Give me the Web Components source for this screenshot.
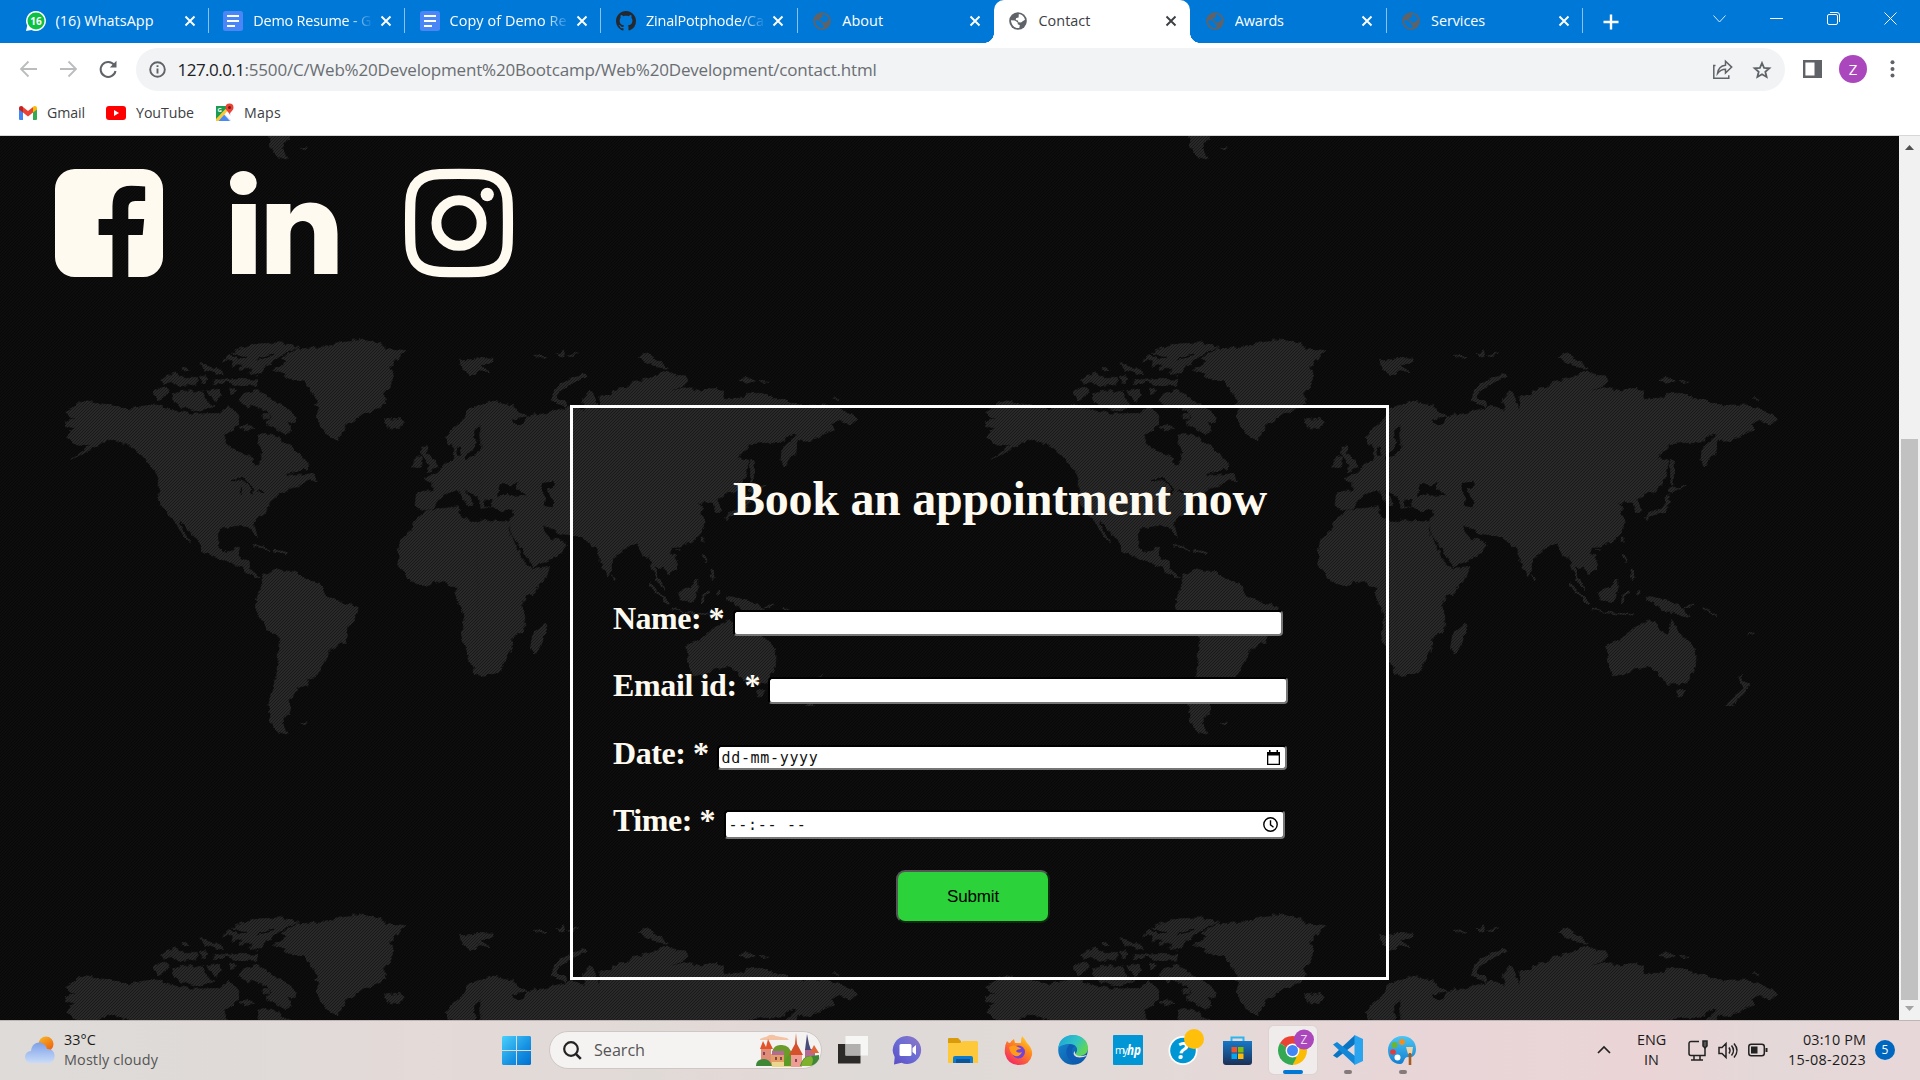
<!DOCTYPE html>
<html lang="en">
<head>
<meta charset="utf-8">
<title>Contact</title>
<style>
html,body{margin:0;height:100%;overflow:hidden;background:#fff;font-family:"Open Sans","Noto Sans",sans-serif}
</style>
</head>
<body>
<desktop-screen></desktop-screen>
<script>
function define(name, css, html){
  const t=document.createElement('template');
  t.innerHTML='<style>:host{display:block;box-sizing:border-box}*{box-sizing:border-box}svg{display:block;flex:none;overflow:visible}'+css+'</style>'+html;
  customElements.define(name,class extends HTMLElement{
    constructor(){super();this.attachShadow({mode:'open'}).append(t.content.cloneNode(true));}
  });
}
/* Text run that is tracked to an exact width given in its "w" attribute */
const runs=[];
customElements.define('fit-text',class extends HTMLElement{
  constructor(){super();this.attachShadow({mode:'open'}).innerHTML='<style>:host{display:inline-block;white-space:pre;flex:none}</style><slot></slot>';}
  connectedCallback(){runs.push(this);}
  fit(){
    const w=+this.getAttribute('w');if(!w)return;
    const n=this.textContent.length,now=this.getBoundingClientRect().width;
    this.style.letterSpacing=((w-now)/n).toFixed(3)+'px';
  }
});

const globe='<svg width="18" height="18" viewBox="0 0 18 18"><circle cx="9" cy="9" r="8.8" fill="#5f6368"/><path fill="var(--gap,#0078d7)" d="M9.800 1.900c3 .3 5.600 2.600 6.200 5.800l-2.300 1.500-1.700 1.200-2.700-.2-.3-1.800-2.300-.3.5-2 2.400-.5zM1.900 8.300l3.900.1 2.700 1.900.3 2 2 1-.5 2.700c-4 .7-7.800-2-8.400-7.700z"/></svg>';
const docs='<svg width="20" height="20" viewBox="0 0 20 20"><rect width="20" height="20" rx="2.500" fill="#4a86f5"/><path stroke="#fff" stroke-width="2.200" d="M4 5h12M4 10h12M4 15h8"/></svg>';
const cat='<svg width="20" height="20" viewBox="0 0 16 16"><path fill="#24292f" d="M8 0C3.580 0 0 3.580 0 8c0 3.540 2.290 6.530 5.470 7.590.4.070.55-.17.55-.38 0-.19-.01-.82-.01-1.490-2.010.37-2.530-.49-2.690-.94-.09-.23-.48-.94-.82-1.130-.28-.15-.68-.52-.01-.53.63-.01 1.080.58 1.230.82.72 1.210 1.870.87 2.330.66.070-.52.28-.87.51-1.070-1.780-.2-3.640-.89-3.640-3.950 0-.87.31-1.590.82-2.150-.08-.2-.36-1.020.08-2.120 0 0 .67-.21 2.200.82.64-.18 1.320-.27 2-.27s1.360.09 2 .27c1.530-1.040 2.200-.82 2.200-.82.44 1.100.16 1.920.08 2.120.51.56.82 1.270.82 2.150 0 3.070-1.870 3.750-3.650 3.950.29.25.54.73.54 1.480 0 1.070-.01 1.930-.01 2.200 0 .21.15.46.55.38A8.010 8.010 0 0 0 16 8c0-4.420-3.580-8-8-8z"/></svg>';
const wa='<svg width="20" height="20" viewBox="0 0 20 20"><path fill="#fff" d="M10 0a10 10 0 1 1-4.600 18.900L0 20l1.200-5.200A10 10 0 0 1 10 0z"/><circle cx="10" cy="10" r="8.500" fill="#0dc143"/><text x="10" y="13.800" font-size="10" font-weight="700" text-anchor="middle" fill="#fff" font-family="Open Sans">16</text></svg>';

define('browser-tab',`
:host{width:196.300px;height:43px;flex:none;display:flex;align-items:center;padding:0 0 2px 14.500px;color:#fff;font-size:14.400px;position:relative}
:host([first]){padding-left:13px}
:host([active]){background:#fff;color:#3c4043;border-radius:10px 10px 0 0;--gap:#fff;margin:0}
:host([active])::before,:host([active])::after{content:"";position:absolute;bottom:0;width:10px;height:10px;background:radial-gradient(circle at 0 0,#0078d7 9.600px,#fff 10px)}
:host([active])::before{left:-10px}:host([active])::after{right:-10px;background:radial-gradient(circle at 100% 0,#0078d7 9.600px,#fff 10px)}
.i{width:20px;display:flex;justify-content:center;margin-right:10px}
.l{width:120px;overflow:hidden;white-space:nowrap;line-height:20px}
:host([fade]) .l{-webkit-mask:linear-gradient(90deg,#000 94px,transparent 120px);mask:linear-gradient(90deg,#000 94px,transparent 120px)}
.x{margin-left:7.500px}
:host([first]) .x{margin-left:9px}
.s{width:1px;height:25px;background:#8cc0ee;margin-left:auto;display:none}
:host([sep]) .s{display:block}
`,`<div class="i"><slot name="icon"></slot></div><div class="l"><slot></slot></div><svg class="x" width="10" height="10" viewBox="0 0 10 10"><path d="M.5.5l9 9M9.500.5l-9 9" stroke="currentColor" stroke-width="1.900"/></svg><div class="s"></div>`);

define('tab-strip',`
:host{height:43px;background:#0078d7;display:flex;padding-left:12.500px;align-items:center;color:#fff}
.plus{margin-left:20px}.win{margin:0 23px 6px auto;display:flex;gap:44px;align-items:center}
`,`
<browser-tab first sep><span slot="icon">${wa}</span><fit-text w="98">(16) WhatsApp</fit-text></browser-tab>
<browser-tab sep fade><span slot="icon">${docs}</span><fit-text w="118">Demo Resume - G</fit-text></browser-tab>
<browser-tab sep fade><span slot="icon">${docs}</span><fit-text w="117">Copy of Demo Re</fit-text></browser-tab>
<browser-tab sep fade><span slot="icon">${cat}</span><fit-text w="118">ZinalPotphode/Ca</fit-text></browser-tab>
<browser-tab><span slot="icon">${globe}</span><fit-text w="41">About</fit-text></browser-tab>
<browser-tab active><span slot="icon">${globe}</span><fit-text w="52">Contact</fit-text></browser-tab>
<browser-tab sep><span slot="icon">${globe}</span><fit-text w="49">Awards</fit-text></browser-tab>
<browser-tab sep><span slot="icon">${globe}</span><fit-text w="54">Services</fit-text></browser-tab>
<svg class="plus" width="16" height="16"><path d="M8 .5v15M.5 8h15" stroke="#fff" stroke-width="2.400"/></svg>
<div class="win">
<svg width="13" height="8"><path d="M.5.5l6 6.500 6-6.500" fill="none" stroke="#d6e9f9"/></svg>
<svg width="13" height="2"><path d="M0 .5h13" stroke="#fff"/></svg>
<svg width="13" height="13" fill="none" stroke="#fff"><rect x=".5" y="2.500" width="10" height="10" rx="1.500"/><path d="M3 .5h7a2.500 2.500 0 0 1 2.500 2.500v7"/></svg>
<svg width="13" height="13"><path d="M.5.5l12 12M12.500.5l-12 12" stroke="#fff"/></svg>
</div>`);

define('tool-bar',`
:host{height:48px;display:flex;align-items:center;padding:5px 25px 0 18.500px;background:#fff}
.nav{display:flex;gap:21px;width:117px;margin-top:-1px}
.url{flex:1;height:43px;border-radius:22px;background:#f1f3f4;display:flex;align-items:center;padding:0 14px 0 13px;font-size:17px;color:#6a6e73}
.url b{font-weight:400;color:#202124}
.t{margin-left:12px;line-height:22px;display:flex}
.r{margin-left:auto;display:flex;gap:20px;align-items:center}
.end{display:flex;align-items:center;margin:-1px 0 0 18px}
.av{width:28px;height:28px;border-radius:50%;background:#ab47bc;color:#fff;font-size:15px;line-height:28px;text-align:center;margin:0 23px 0 17px}
`,`
<div class="nav">
<svg width="19" height="18" fill="none" stroke="#babcbe" stroke-width="1.800"><path d="M18 9H2M9.500 1.500L2 9l7.500 7.500"/></svg>
<svg width="19" height="18" fill="none" stroke="#babcbe" stroke-width="1.800"><path d="M1 9h16M9.500 1.500L17 9l-7.500 7.500"/></svg>
<svg width="18" height="18" fill="none" stroke="#5f6368" stroke-width="2"><path d="M15.200 5A7.500 7.500 0 1 0 16.500 11"/><path d="M17.500.8v6.700h-6.700z" fill="#5f6368" stroke="none"/></svg>
</div>
<div class="url"><svg width="17" height="17" fill="none" stroke="#5f6368"><circle cx="8.500" cy="8.500" r="7.300" stroke-width="1.900"/><path stroke-width="1.900" d="M8.500 7.500v5M8.500 4.200v1.900"/></svg>
<div class="t"><b><fit-text w="67">127.0.0.1</fit-text></b><fit-text w="632">:5500/C/Web%20Development%20Bootcamp/Web%20Development/contact.html</fit-text></div>
<div class="r"><svg width="20" height="19" fill="none" stroke="#5f6368" stroke-width="1.500"><path d="M2.500 5.500H.8v12.700h15v-3"/><path d="M4.500 13.500c.6-5 3.400-7.800 8-8.300V1.300l6.200 5.800-6.200 6V9.300c-3.500 0-6 1.500-8 4.200z"/></svg>
<svg width="18" height="18" viewBox="0 0 20 20"><path fill="none" stroke="#5f6368" stroke-width="2" d="M10 2.200l2.300 5.400 5.900.5-4.500 3.900 1.400 5.700L10 14.700l-5.100 3 1.400-5.700-4.500-3.900 5.900-.5z"/></svg></div></div>
<div class="end"><svg width="19" height="18"><path d="M1.200 1.200h16.600v15.600H1.200z" fill="#fff" stroke="#5f6368" stroke-width="2.400"/><path d="M11.500 0H19v18h-7.500z" fill="#5f6368"/></svg>
<div class="av">Z</div>
<svg width="5" height="18" fill="#5f6368"><circle cx="2.500" cy="2.200" r="2"/><circle cx="2.500" cy="9" r="2"/><circle cx="2.500" cy="15.500" r="2"/></svg></div>`);

define('bookmark-bar',`
:host{height:45px;border-bottom:1px solid #d5d8da;background:#fff;display:flex;align-items:center;padding:0 0 1px 19px;font-size:14.200px;color:#3c4043}
span{display:flex;align-items:center;margin-right:21px}svg{margin-right:10px}
`,`
<span><svg width="18" height="14" viewBox="0 0 18 14"><path fill="#4285f4" d="M0 2v11a1 1 0 0 0 1 1h3V5z"/><path fill="#34a853" d="M18 2v11a1 1 0 0 1-1 1h-3V5z"/><path fill="#ea4335" d="M4 1l5 4 5-4v5.500L9 10.500 4 6.500z"/><path fill="#c5221f" d="M0 2.200C0 0 2.500-.5 4 .8v5.700L0 3.600z"/><path fill="#fbbc04" d="M18 2.200C18 0 15.500-.5 14 .8v5.700l4-2.900z"/></svg><fit-text w="38">Gmail</fit-text></span>
<span><svg width="20" height="14" viewBox="0 0 20 14"><rect width="20" height="14" rx="3" fill="#f00"/><path d="M8 4l5 3-5 3z" fill="#fff"/></svg><fit-text w="58">YouTube</fit-text></span>
<span><svg width="19" height="19" viewBox="0 0 19 19"><path d="M1 3h15v15H1z" fill="#e8eaed"/><path d="M1 3h13l-7 7.500L1 17z" fill="#1e9b52"/><path d="M3 18l6-6.500 6 6.500z" fill="#4a89f3"/><path d="M9 10l3-3 5 8-1 2z" fill="#fff"/><path d="M1 16L10.500 6l2 2L3.500 18H1z" fill="#fbc934"/><path d="M14.500 12c0-3-4-4-4-7.500a4 4 0 0 1 8 0c0 3.500-4 4.500-4 7.500z" fill="#e94335"/><circle cx="14.500" cy="4.500" r="1.500" fill="#811411"/><text x="2.500" y="9" font-size="6" fill="#fff" font-weight="700" font-family="Open Sans">G</text></svg><fit-text w="37">Maps</fit-text></span>`);

/* Repeating 920x575 world map under a fine diagonal weave */
define('world-backdrop',`:host{overflow:hidden}svg{width:100%;height:100%}`,`
<svg xmlns="http://www.w3.org/2000/svg"><defs>
<filter id="rough" x="0" y="0" width="920" height="575" filterUnits="userSpaceOnUse" color-interpolation-filters="sRGB"><feTurbulence type="fractalNoise" baseFrequency=".16" numOctaves="2" seed="4"/><feDisplacementMap in="SourceGraphic" scale="6" xChannelSelector="R" yChannelSelector="G"/></filter>
<pattern id="weave" width="3" height="3" patternUnits="userSpaceOnUse"><path fill="#000" fill-opacity=".4" d="M2 0h1v1H2zM1 1h1v1H1zM0 2h1v1H0z"/></pattern>
<pattern id="map" width="920" height="575" y="184" patternUnits="userSpaceOnUse">
<rect width="920" height="575" fill="#0d0d0d"/>
<g fill="#292929" stroke="#292929" stroke-width="2" stroke-linejoin="round" filter="url(#rough)">
<g transform="translate(40 0) scale(.333333)">
<path d="M75 275L100 262 115 250 140 242 175 250 225 256 260 268 310 258 350 255 375 262 400 272 430 276 460 282 540 280 562 262 580 268 600 290 590 320 555 345 553 370 590 395 615 402 635 412 645 440 655 438 668 395 655 375 660 345 690 342 715 350 745 375 765 390 812 435 800 450 770 458 735 470 785 465 822 460 832 482 800 480 790 492 755 505 720 520 690 545 675 580 640 605 652 650 640 645 628 620 590 617 545 625 533 645 535 680 560 700 580 690 585 682 602 682 595 712 628 722 630 750 660 772 645 775 610 745 580 730 550 720 515 708 485 690 480 670 455 640 430 612 415 602 430 635 455 672 435 655 410 610 380 580 355 540 358 480 345 450 330 435 305 405 285 390 265 375 240 367 200 358 180 372 140 395 95 418 140 385 150 378 110 375 78 350 105 325 70 316 78 305 105 298z"/>
<path d="M598 240L612 220 650 212 680 225 700 242 735 262 770 292 762 308 742 305 755 330 735 342 700 322 675 312 695 290 680 270 650 258 622 262 600 250z"/>
<path d="M395 225L420 215 440 210 462 222 485 215 500 240 520 262 470 272 440 262 425 266 400 245zM343 225L352 202 375 200 388 210 378 230 355 240zM365 180L385 165 410 158 425 172 470 172 474 190 420 198 395 185 370 190zM480 130L510 140 545 150 550 165 530 160 495 150zM520 175L565 180 600 178 652 180 650 195 600 197 560 185 520 195zM425 145L440 142 448 150 430 156zM500 212L530 205 545 222 528 245 510 230zM570 205L585 200 590 215 572 225zM620 335L600 322 620 312 645 325zM478 170L495 165 505 182 485 190zM668 285L688 280 690 295 670 298z"/>
<path d="M545 125L565 108 580 95 610 85 650 72 720 68 780 82 745 95 715 112 690 128 680 142 650 165 630 160 635 145 600 148 605 132 575 140 580 122z"/>
<path d="M700 148L745 125 725 118 740 105 770 90 800 82 865 80 900 65 970 57 1010 66 1035 77 1035 90 1065 88 1100 92 1075 115 1050 140 1063 162 1055 182 1050 200 1028 225 1040 238 1025 262 1000 268 960 290 915 315 905 345 893 360 865 348 845 325 828 290 840 262 820 255 835 240 815 220 795 185 770 178 735 175 740 160z"/>
<path d="M1030 295L1055 300 1080 295 1095 308 1080 322 1050 324 1035 312zM1145 378L1165 378 1160 398 1180 415 1195 442 1175 452 1155 455 1167 435 1150 412zM1118 442L1125 415 1145 408 1142 438zM1258 118L1300 120 1310 112 1360 115 1350 130 1320 130 1345 155 1320 148 1300 165 1280 150z"/>
<path d="M645 860L655 820 668 795 665 770 705 745 730 752 770 755 800 780 840 790 855 825 900 845 955 862 950 885 925 920 915 965 870 990 850 1030 825 1070 800 1075 805 1095 770 1105 765 1125 745 1140 750 1165 740 1190 728 1205 745 1243 715 1235 688 1205 690 1150 705 1080 713 1030 718 955 680 925 660 890zM784 1210L800 1208 795 1216z"/>
<path d="M1150 577L1200 566 1255 560 1262 590 1310 608 1320 600 1360 604 1400 607V1010L1390 1040 1375 1058 1325 1066 1310 1068 1295 1035 1280 1000 1270 965 1262 940 1275 905 1265 862 1246 835 1250 798 1228 795 1205 780 1170 792 1130 795 1108 778 1090 755 1072 730 1080 710 1075 685 1085 655 1115 630 1125 600z"/>
<path d="M1420 255L1385 248 1350 243 1320 252 1285 270 1265 305 1235 330 1218 350 1225 375 1240 375 1240 418 1215 430 1195 455 1155 475 1178 490 1178 512 1130 515 1125 560 1150 572 1175 570 1190 545 1225 515 1250 512 1265 530 1288 558 1298 542 1270 508 1310 530 1328 560 1342 560 1338 540 1365 535V558L1420 572z"/>
<g fill="none" stroke-width="6"><path d="M635 672L665 680 690 692M700 692L725 695 742 700"/></g>
<g stroke="#0d0d0d" fill="none" stroke-width="9"><path stroke-width="15" d="M1345 305L1310 335 1312 365M1320 365L1308 395 1275 410"/><path d="M1320 360L1372 360M1255 380L1258 410"/><path stroke-width="5" d="M575 487L605 475 620 490M602 500V525M620 490L640 505 635 520M655 515L672 512M740 465L800 450M650 120L700 105M560 100L620 115"/></g>
</g>
<g transform="translate(460 0) scale(.34439 .333333)">
<path d="M50 608L80 600 115 606 150 605 140 625 165 680 185 725 200 735 211 748 260 742 245 780 215 815 190 835 180 860 188 890 188 930 150 955 155 985 135 1010 120 1040 105 1058 90 1062 50 1068z"/>
<path d="M60 252L95 243 150 262 190 285 193 292 215 285 240 282 290 268 320 258 350 265 365 272 355 240 380 210 392 230 400 270 405 230 440 225 447 208 480 205 500 185 550 175 600 152 620 165 655 168 662 185 640 200 700 212 740 205 762 215 765 235 820 235 835 220 880 220 910 235 950 240 962 253 1020 255 1070 255 1110 272 1155 295 1133 315 1100 300 1080 310 1088 330 1060 340 1035 358 980 362 972 400 942 440 932 420 935 385 985 340 950 350 925 368 880 368 840 372 820 400 805 415 838 420 832 460 815 495 795 515 770 520 745 540 760 575 745 578 735 548 710 545 692 548 705 560 698 575 712 610 700 640 670 668 640 678 615 680 610 695 632 720 630 745 608 765 590 745 568 735 575 770 598 812 575 790 560 750 550 710 538 715 515 668 480 685 445 720 440 750 428 768 410 730 395 680 385 680 355 650 290 640 240 615 245 635 262 655 285 655 312 675 290 705 215 740 200 720 175 680 150 640 145 605 158 570 120 572 95 560 60 565z"/>
<path d="M515 115L540 97 572 118 605 145 575 142 550 130zM812 175L835 172 860 182 830 190zM872 184L898 187 880 190zM215 105L255 108 235 115zM278 102L300 92 306 112 290 110zM312 105L345 98 325 108zM1080 237L1100 235 1098 241zM0 120L35 120 50 112 98 115 90 130 60 132 80 155 50 148 30 165 10 150z"/>
<path d="M632 820L665 800 690 775 692 800 680 845 640 840zM772 828L795 832 820 838 860 850 900 893 872 882 850 878 820 875 800 850 785 845z"/>
<path d="M658 975L700 960 735 925 780 902 802 905 810 930 835 942 848 900 870 940 900 970 918 1000 916 1040 890 1090 835 1093 805 1055 780 1040 740 1047 715 1060 675 1068 665 1030zM862 1110L885 1112 875 1133 868 1130zM1045 1068L1060 1088 1075 1095 1055 1115zM1050 1108L1060 1112 1030 1150 1015 1160 1002 1155zM248 908L250 930 230 990 215 1000 204 985 212 940zM440 765L452 778 445 782z"/>
<path d="M843 418L855 430 853 465 850 495 844 490zM840 505L850 500 864 508 850 520 838 518zM832 525L843 525 838 560 826 578 800 584 780 590 772 602 768 590 790 575 820 565 830 545z"/>
<g fill="none"><path stroke-width="15" d="M270 235Q285 190 368 167M265 232L310 255"/><path stroke-width="8" d="M745 545L755 578M706 700L715 728M728 745L736 778M706 650V668M550 790L580 825 608 855M705 855V825L728 818"/><path stroke-width="5" d="M615 865L660 878 740 885M862 508L888 496M880 866L915 852M940 860L975 890M625 690H640M1068 942L1084 936M750 810V825"/></g>
<g fill="#0d0d0d" stroke="none"><path d="M108 525L115 490 138 490 150 502 170 485 165 505 192 525 165 530 140 522 110 530zM232 490L270 485 276 492 255 508 262 530 275 545 268 562 245 558 250 535 230 502zM150 300L192 292 185 305 165 316zM75 540L95 535 90 560 70 560z"/><path d="M392 225L405 225 404 272zM615 212L655 195 650 202z"/></g>
</g></g></pattern></defs>
<rect width="100%" height="100%" fill="url(#map)"/><rect width="100%" height="100%" fill="url(#weave)"/></svg>`);

define('social-links',`:host{display:flex;gap:67px;padding:32.500px 0 0 54.500px;height:140px}`,`
<svg width="108" height="108" viewBox="0 0 109 108" preserveAspectRatio="none"><path fill="#fffaf0" fill-rule="evenodd" d="M20 0h69a20 20 0 0 1 20 20v68a20 20 0 0 1-20 20H74V66h14.500L90 50H74V39q0-7 7-7h10V17.500q-7-.8-14-.8Q58 16.700 58 37v13H44v16h14v42H20A20 20 0 0 1 0 88V20A20 20 0 0 1 20 0z"/></svg>
<svg width="108" height="108" viewBox="0 0 109 108" preserveAspectRatio="none" fill="#fffaf0"><ellipse cx="13.500" cy="14" rx="13.500" ry="12"/><path d="M2 35h24v70H2zM37 35h24v10c4-8 12-11.500 20-11.500 17 0 27.500 12 27.500 31.500v40H85V65c0-8-5-13-11.500-13S61 57 61 65v40H37z"/></svg>
<svg width="108" height="108" viewBox="0 0 109 108" preserveAspectRatio="none" fill="none" stroke="#fffaf0"><path stroke-width="10.300" d="M35 5.200Q54 4.600 74 5.200C94 6 103 15 103.600 34Q104.200 54 103.600 74C103 93 94 102 74 102.800Q54 103.400 35 102.800C15 102 6 93 5.400 74Q4.800 54 5.400 34C6 15 15 6 35 5.200z"/><circle cx="54.500" cy="54" r="22.800" stroke-width="10"/><circle cx="83" cy="25.500" r="6.700" fill="#fffaf0" stroke="none"/></svg>`);

define('form-row',`
:host{display:flex;align-items:flex-start;height:67px;padding-left:40px;font:700 32px/38px "Liberation Serif",serif;color:#fffaf0}
.b{margin:var(--t,11px) 0 0 auto;width:var(--w);height:var(--h);margin-right:var(--r);background:#fff;border:2px inset #767676;border-color:#202020 #767676 #767676 #202020;border-radius:4px;display:flex;align-items:center;justify-content:space-between;padding:0 5px 0 2.500px;font:400 15px/18px "DejaVu Sans Mono","Liberation Mono",monospace;color:#111}
`,`<slot name="label"></slot><div class="b"><slot></slot><slot name="icon"></slot></div>`);

define('booking-form',`
:host{width:819px;height:575px;border:3px solid #fff;margin:129px 0 0 570px;padding-top:62px}
h1{margin:0 0 73px 160px;font:700 48px/56px "Liberation Serif",serif;color:#fffaf0;height:56px;padding-top:1px}
button{display:block;margin:0 0 0 323px;width:154px;height:53px;border:2px solid;border-color:#555 #0c2a0e #0c2a0e #555;border-radius:9px;background:#2bd239;color:#000;font:17px "Liberation Sans",sans-serif;padding:0}
`,`<h1><fit-text w="534">Book an appointment now</fit-text></h1>
<form-row style="--w:550px;--h:26px;--r:103px"><fit-text slot="label" w="111">Name: *</fit-text></form-row>
<form-row style="--w:520px;--h:27px;--r:98px;height:68px"><fit-text slot="label" w="147">Email id: *</fit-text></form-row>
<form-row style="--w:570px;--h:25px;--r:99px"><fit-text slot="label" w="95.500">Date: *</fit-text><fit-text w="97">dd-mm-yyyy</fit-text><svg slot="icon" width="13" height="15"><path fill="#000" d="M0 2h2V0h1.500v2h6V0H11v2h2v13H0zM1.300 5.500v8.200h10.400V5.500z" fill-rule="evenodd"/></svg></form-row>
<form-row style="--w:561px;--h:29px;--r:101px;--t:9px;height:69px"><fit-text slot="label" w="102">Time: *</fit-text><fit-text w="78">--:-- --</fit-text><svg slot="icon" width="15" height="15" fill="none" stroke="#000" stroke-width="1.400"><circle cx="7.500" cy="7.500" r="6.700"/><path d="M7.500 3.200v4.600l3 2.400"/></svg></form-row>
<button><fit-text w="52">Submit</fit-text></button>`);

define('web-page',`
:host{height:884px;display:flex;overflow:hidden}
.p{flex:1;display:grid;grid-template:884px / 100%;overflow:hidden}
.p>*{grid-area:1/1}
.sb{width:21px;background:#f1f1f1;display:flex;flex-direction:column;align-items:center;padding:9px 0 9px}
.th{width:17px;height:561px;background:#c1c1c1;margin:289px 0 auto}
`,`<div class="p"><world-backdrop></world-backdrop><main><social-links></social-links><booking-form></booking-form></main></div>
<div class="sb"><svg width="9" height="5"><path d="M0 5l4.500-5L9 5z" fill="#505050"/></svg><div class="th"></div><svg width="9" height="5"><path d="M0 0l4.500 5L9 0z" fill="#a3a3a3"/></svg></div>`);

define('task-app',`
:host{width:55.050px;height:60px;flex:none;display:grid;place-items:center;position:relative}
:host([active])::before{content:"";grid-area:1/1;width:48px;height:48px;border-radius:5px;background:#f0ecec;box-shadow:0 0 0 1px #ddd3d2}
slot{display:block;grid-area:1/1}
:host([run])::after{content:"";position:absolute;left:23.500px;bottom:6px;width:8px;height:4px;border-radius:2px;background:#857a7a}
:host([active])::after{left:17.500px;width:20px;background:#0078d4}
::slotted(svg){display:block;overflow:visible}
`,`<slot></slot>`);

define('task-bar',`
:host{height:60px;box-shadow:inset 0 1px #bdb6b4;background:linear-gradient(90deg,#dedbd8 0,#dfdad8 13%,#e4dad8 22%,#e0dad7 34%,#e3d9d7 38%,#dedad7 45%,#e3dad8 60%,#e9d5d7 75%,#ead4d6 86%,#e4d8d8 92%,#e8d7d8);display:flex;align-items:center;font-size:14.400px;color:#1b1b1b;line-height:20px}
.w{display:flex;width:502px;padding-left:25px;gap:9px;align-items:center}
.w div,.c{display:flex;flex-direction:column;align-items:flex-start;margin-top:-1px}
.w i{font-style:normal;color:#555}
.q{margin:0 3px 0 18px;width:273px;height:38px;border-radius:19px;background:#f5f3f2;border:1px solid #cfc7c5;display:flex;align-items:center;padding:0 2px 0 13px;font-size:16.200px;color:#555}
.q fit-text{margin:0 auto 0 12px}
.tray{margin-left:auto;display:flex;align-items:center}
.c.m{align-items:center}.c.e{align-items:flex-end}
.n{width:20px;height:20px;border-radius:50%;background:#0067c0;color:#fff;font-size:12px;text-align:center;margin:0 25px 0 9px}
`,`
<div class="w"><svg width="30" height="30" viewBox="0 0 30 30"><defs><linearGradient id="su" x2=".6" y2="1"><stop stop-color="#f7b92a"/><stop offset="1" stop-color="#f0640c"/></linearGradient><linearGradient id="cl" x2="0" y2="1"><stop stop-color="#7d9fe8"/><stop offset="1" stop-color="#c9dcf8"/></linearGradient></defs><circle cx="21" cy="9" r="7.500" fill="url(#su)"/><path fill="url(#cl)" d="M6 28a6 6 0 0 1 0-12c1-11 14-11 16-2 10-1 10 14 1 14z"/></svg>
<div><fit-text w="32">33°C</fit-text><i><fit-text w="94">Mostly cloudy</fit-text></i></div></div>
<svg width="29" height="29"><defs><linearGradient id="wn" x2="1" y2="1"><stop stop-color="#4bd0fb"/><stop offset=".6" stop-color="#1590e2"/><stop offset="1" stop-color="#0070d0"/></linearGradient></defs><path fill="url(#wn)" d="M1 0h13v14H0V1zM15 0h13l1 1v13H15zM0 15h14v14H1l-1-1zM15 15h14v13l-1 1H15z"/></svg>
<div class="q"><svg width="19" height="19" fill="none" stroke="#222" stroke-width="2.200"><circle cx="8" cy="8" r="6.800"/><path d="M12.800 12.800l5 5" stroke-width="2.600"/></svg><fit-text w="51">Search</fit-text>
<svg width="63" height="34" viewBox="0 0 63 34"><path fill="#f3c3a4" d="M4 6q3-2 6-2 5-4 10-1l11 2 2 2H4z"/><path fill="#6b9b2a" d="M16 19q2-8 10-7 8 0 10 10v11H16z"/><path fill="#df8c78" d="M5 15h10v18H5z"/><path fill="#e4542b" d="M4 16L7 8l3 6 2-8 5 10z"/><path fill="#e4a064" d="M15 21h13v12H15z"/><path fill="#b26b95" d="M16 18h12v4H16zM49 16h10v9H49z"/><path fill="#4c4a78" d="M49 17l2-16 2 10 2 6z"/><path fill="#e06539" d="M54 20l4-8 5 8z"/><path fill="#ecd58c" d="M16 29h22v5H16z"/><path fill="#5b9a27" d="M28 29q4-10 11-8v12H28z"/><path fill="#ef9c93" d="M35 21h11v13H35z"/><path fill="#d5512b" d="M33 22l6-11 1-11 1 11 6 11z"/><path fill="#3e8736" d="M0 33q0-7 8-7 6 0 8 7zM44 33q3-11 11-10l8-1v4q-3 6-9 7z"/><path fill="#7fb02e" d="M45 33q2-10 10-10 4 3 0 10z"/><path d="M7 19h2v3H7zM19 24h2v3h-2zM24 24h2v3h-2zM39 26h2v3h-2z" fill="#84425b"/></svg></div>
<task-app><svg width="30" height="28"><path d="M0 8h22.500v19.500H0z" fill="#2b2a28"/><path d="M7.500 0H30v19.500H7.500z" fill="#f7f7f7" fill-opacity=".93"/><path d="M7.500 8h15v11.500h-15z" fill="#b2b0ae"/></svg></task-app>
<task-app><svg width="29" height="29"><defs><linearGradient id="ch" x1="1" x2="0" y2="1"><stop stop-color="#8f77c2"/><stop offset=".5" stop-color="#6b6cd6"/><stop offset="1" stop-color="#5b4cc4"/></linearGradient></defs><path fill="url(#ch)" d="M14.500 0a14 14 0 1 1-6 26.800L1 28.500l.7-7.500A14 14 0 0 1 14.500 0z"/><rect x="6.500" y="8" width="12" height="12" rx="1.500" fill="#fff"/><path d="M19.500 12l3.500-3v10l-3.500-3z" fill="#fff"/></svg></task-app>
<task-app><svg width="30" height="27"><path d="M0 2a1 1 0 0 1 1-1h9l3 3v4H0z" fill="#d99b0b"/><path d="M0 6h12l3-2h14l1 1v21H0z" fill="#fdc83a"/><path d="M5 26v-5a2 2 0 0 1 2-2h16a2 2 0 0 1 2 2v5z" fill="#0f7bd0"/><path d="M8 22h14v4H8z" fill="#0b5496"/></svg></task-app>
<task-app><svg width="28" height="29" viewBox="0 0 28 29"><defs><linearGradient id="ff" x1=".9" x2=".2" y2="1"><stop stop-color="#ffe02e"/><stop offset=".4" stop-color="#ff8a1c"/><stop offset="1" stop-color="#f2226b"/></linearGradient></defs><path fill="url(#ff)" d="M3 5q1 2 3 2 1-2 4-4l1 4 6 0q0-4 1-7 3 3 5 7 6 6 5 12-2 10-13 10T1 18Q0 10 3 5z"/><circle cx="14.500" cy="16" r="6.500" fill="#7542d8"/><path fill="#ff9a1a" d="M5 11q5-3 9 0 3 1 3 2-4 0-5 2 2 3 6 1-2 5-7 4-5-2-6-9z"/></svg></task-app>
<task-app><svg width="30" height="30" viewBox="0 0 30 30"><defs><linearGradient id="e1" x2="1" y2=".5"><stop stop-color="#1aa0dc"/><stop offset=".6" stop-color="#31c4c4"/><stop offset="1" stop-color="#60d557"/></linearGradient><linearGradient id="e2" x2="1" y2="1"><stop stop-color="#168bd4"/><stop offset="1" stop-color="#0b4d9c"/></linearGradient></defs><circle cx="15" cy="15" r="14.800" fill="url(#e2)"/><path fill="url(#e1)" d="M.3 13C1 5 7 0 15 0c9 0 15 6 15 13 0 6-5 8-9 8-3 0-5-1-3-3 3-4 0-9-6-9C6 9 2 11 .3 13z"/><path fill="#dedad7" d="M28.500 21c-3 2-10 3-12.500-1-1-2 0-3 1-4-1 5 5 6 11.500 4z"/><path fill="#0d5db4" d="M12 9c-5 4-5 12 1 17 5 4 12 1 15-5-6 3-13 2-14-4-.3-3 1-5 3-6z"/></svg></task-app>
<task-app><svg width="30" height="30"><rect width="30" height="30" rx="1" fill="#0096d6"/><text x="2" y="19" font-size="10.500" fill="#fff" font-family="Open Sans" textLength="13">my</text><text x="14" y="20" font-size="15" font-style="italic" font-weight="700" fill="#fff" font-family="Open Sans" textLength="14" lengthAdjust="spacingAndGlyphs">hp</text></svg></task-app>
<task-app><svg width="30" height="30"><circle cx="15" cy="15.500" r="14.500" fill="#fff"/><circle cx="15" cy="15.500" r="12.800" fill="#0095d3"/><text x="14" y="24" text-anchor="middle" font-size="24" font-weight="700" font-style="italic" fill="#fff" font-family="Open Sans">?</text><circle cx="26" cy="4" r="10" fill="#ffbf0b"/></svg></task-app>
<task-app><svg width="29" height="29"><defs><linearGradient id="st" x2="0" y2="1"><stop stop-color="#1678c8"/><stop offset="1" stop-color="#1c3056"/></linearGradient></defs><path d="M8.500 6V1.500h12V6" fill="none" stroke="#2fb5ee" stroke-width="2"/><path d="M0 5h29v21a3 3 0 0 1-3 3H3a3 3 0 0 1-3-3z" fill="url(#st)"/><path fill="#f35325" d="M8.500 11h5.500v5.500H8.500z"/><path fill="#81bc06" d="M15 11h5.500v5.500H15z"/><path fill="#05a6f0" d="M8.500 17.500H14V23H8.500z"/><path fill="#ffba08" d="M15 17.500h5.500V23H15z"/></svg></task-app>
<task-app active run><svg width="29" height="29" viewBox="-14.500 -14.500 29 29"><path fill="#ea4335" d="M0 0L-12.600-7.200A14.500 14.500 0 0 1 12.600-7.200z"/><path fill="#fbbc04" d="M0 0L12.600-7.200A14.500 14.500 0 0 1 0 14.500z"/><path fill="#34a853" d="M0 0L0 14.500A14.500 14.500 0 0 1-12.600-7.200z"/><path fill="#ea4335" d="M0-7H12.600L0-8-8-9-6 3z"/><path fill="#fbbc04" d="M6 3.500L0 14.500 12.500 0V-7H2z"/><path fill="#34a853" d="M-6 3.500L-12.600-7.200-12 8 0 14.500 4 7z"/><circle r="6.900" fill="#fff"/><circle r="5.500" fill="#4285f4"/><circle cx="11.500" cy="-11" r="10" fill="#ab47bc"/><text x="11.500" y="-6.800" font-size="12" text-anchor="middle" fill="#f3dff6" font-family="Open Sans">Z</text></svg></task-app>
<task-app run><svg width="30" height="30"><path fill="#0a74c4" d="M22 0v9L4 23 0 20.500z"/><path fill="#1287d8" d="M22 30v-9L4 7 0 9.500z"/><path fill="#2aa4ee" d="M21.500 0L30 4v22l-8.500 4z"/></svg></task-app>
<task-app run><svg width="29" height="29"><defs><linearGradient id="pa" x2="0" y2="1"><stop stop-color="#49c6f5"/><stop offset="1" stop-color="#1580cf"/></linearGradient></defs><path fill="url(#pa)" d="M14 0c9 0 14 6 14 13s-4 9-8 8c-5 0-3 7-8 7C4 28 0 21 0 14S6 0 14 0z"/><circle cx="14" cy="6" r="3" fill="#ef8f1f"/><circle cx="6.500" cy="9" r="3" fill="#6cb52c"/><circle cx="5" cy="16" r="2.800" fill="#e23b3b"/><circle cx="9.500" cy="21.500" r="3" fill="#fff"/><path fill="#f2d3a4" d="M18 11h7l-1 7h-4z"/><path stroke="#a35c22" stroke-width="2.600" d="M22 17v12"/></svg></task-app>
<div class="tray"><svg width="14" height="8" style="margin-right:26px"><path d="M1 7l6-6 6 6" fill="none" stroke="#222" stroke-width="1.700"/></svg>
<div class="c m" style="margin-right:22px"><fit-text w="29">ENG</fit-text><fit-text w="15">IN</fit-text></div>
<svg width="20" height="21" fill="none" stroke="#222" stroke-width="1.500" style="margin-right:10px"><path d="M11 1.500H3a2 2 0 0 0-2 2v10a2 2 0 0 0 2 2h14v-4M6 15.500v4M12 15.500v4M3 20h12M17 7.500v4"/><path d="M15 1h4v5l-2 2-2-2z" fill="#555"/></svg>
<svg width="20" height="17" fill="none" stroke="#222" stroke-width="1.500" style="margin-right:10px"><path d="M1 5.500h3L8 1.500v14L4 11.500H1zM11 5.500q2 3 0 6M13.500 3.500q4 5 0 10M16 1.500q6 7 0 14"/></svg>
<svg width="20" height="14" style="margin-right:20px"><rect x=".8" y="1.300" width="15.500" height="11.500" rx="2.500" fill="none" stroke="#222" stroke-width="1.500"/><path d="M3 3.500h6.500v7H3zM17.500 5h2v4h-2z" fill="#222"/></svg>
<div class="c e"><fit-text w="63">03:10 PM</fit-text><fit-text w="78">15-08-2023</fit-text></div><div class="n">5</div></div>`);

define('desktop-screen',`:host{width:1920px;height:1080px;overflow:hidden}`,`<tab-strip></tab-strip><tool-bar></tool-bar><bookmark-bar></bookmark-bar><web-page></web-page><task-bar></task-bar>`);
runs.forEach(r=>r.fit());
</script>
</body>
</html>
